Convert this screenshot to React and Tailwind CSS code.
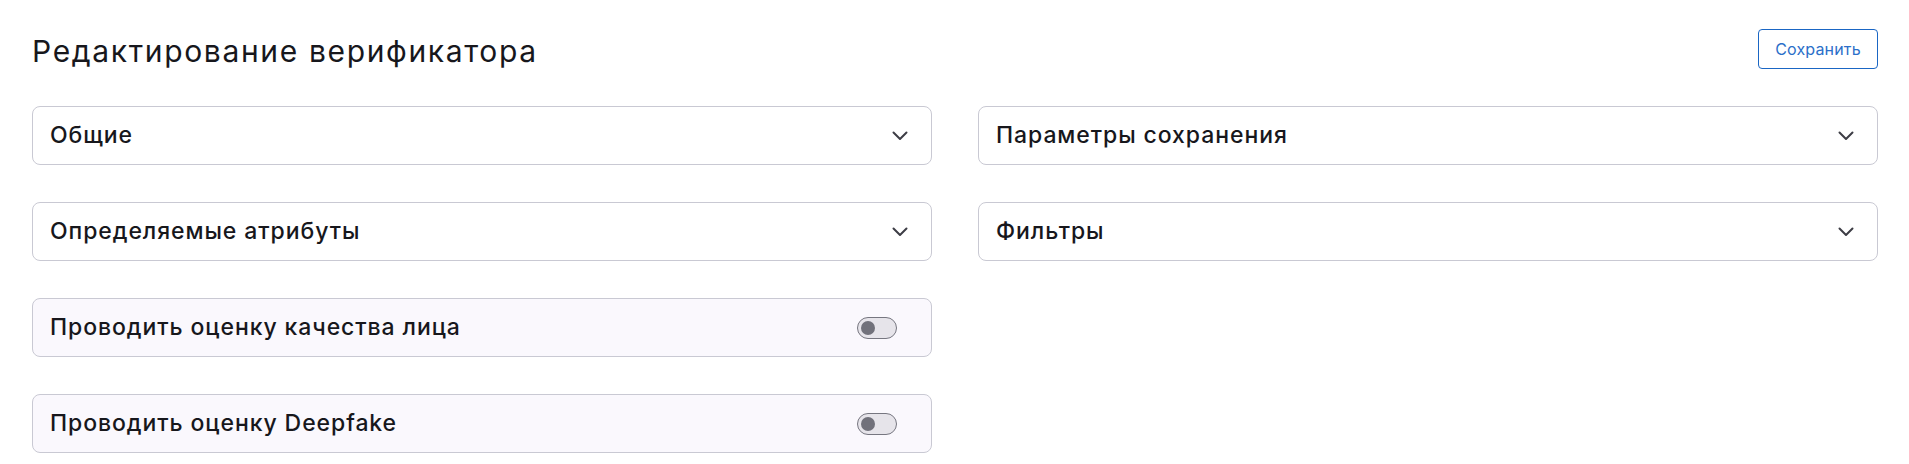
function Chevron() {
  return (
    <svg width="16" height="10" viewBox="0 0 16 10" fill="none" className="text-[#3d3d45]">
      <path d="M1.5 1.5 8 8l6.5-6.5" stroke="currentColor" strokeWidth="2" strokeLinecap="round" strokeLinejoin="round" />
    </svg>
  );
}

function Section({ title }) {
  return (
    <div className="flex h-[59px] items-center justify-between rounded-lg border border-[#c9c9d3] bg-white pl-[17px] pr-[23px]">
      <span className="text-[23px] font-medium tracking-[0.04em] text-[#17171c]">{title}</span>
      <Chevron />
    </div>
  );
}

function ToggleRow({ title }) {
  return (
    <div className="flex h-[59px] items-center justify-between rounded-lg border border-[#c9c9d3] bg-[#faf8fd] pl-[17px] pr-[34px]">
      <span className="text-[23px] font-medium tracking-[0.04em] text-[#17171c]">{title}</span>
      <button className="flex h-[22px] w-[40px] items-center rounded-full border border-[#767680] bg-[#e6e4ea] px-[3px]">
        <span className="h-[14px] w-[14px] rounded-full bg-[#71717b]" />
      </button>
    </div>
  );
}

export default function App() {
  return (
    <div
      className="min-h-screen bg-white pl-8 pr-[31px] pt-[29px] text-[#17171c]"
      style={{ fontFamily: 'Inter, "Noto Sans", sans-serif' }}
    >
      <div className="flex h-10 items-center justify-between">
        <h1 className="pt-[3px] text-[30px] leading-10 font-normal tracking-[0.055em]">Редактирование верификатора</h1>
        <button className="h-10 w-[120px] rounded border border-[#1a66c4] text-[16px] tracking-[0.01em] text-[#2b6fc9]">
          Сохранить
        </button>
      </div>

      <div className="mt-[37px] grid grid-cols-2 gap-x-[46px] gap-y-[37px]">
        <Section title="Общие" />
        <Section title="Параметры сохранения" />
        <Section title="Определяемые атрибуты" />
        <Section title="Фильтры" />
        <ToggleRow title="Проводить оценку качества лица" />
        <div />
        <ToggleRow title="Проводить оценку Deepfake" />
      </div>
    </div>
  );
}
